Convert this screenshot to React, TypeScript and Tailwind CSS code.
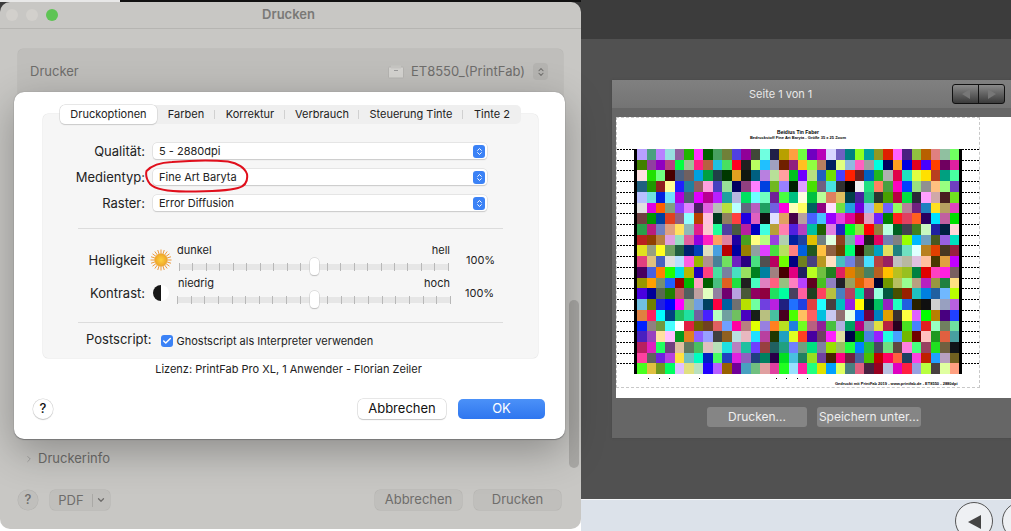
import React from 'react';
import { ChevronRight, ChevronDown, ChevronsUpDown, Check } from 'lucide-react';

const font = { fontFamily: 'Inter, "Liberation Sans", sans-serif' };

const chart = [
  'b8a0ff 4aa080 b880ff 98e0e0 9060a0 20b800 ff30ff 006000 48a060 708038 5040e0 900098 404838 70ffe0 202048 b8a000 ffa040 70ff40 7000c0 b800b8 d8d8ff 7060c0 008080 90ff20 00a0a0 909820 e02000 ff60ff 482080 90c040 b86000 e08080 90c0a0 70ff60',
  '408000 9040a0 9000c0 b84080 00ff40 a0c098 ff2080 b86040 20c0e0 48e060 ff0020 202020 b8ff60 20c0ff a0a0c0 702000 902080 ffc020 90ff40 b88060 002060 e0ff80 90b8e0 ff60c0 a0a0a0 00ffe0 000060 ffa020 0000e0 e00020 4800ff ff4000 700060 e020a0',
  'ffe0e0 20e000 70ff80 480000 4a6080 706060 00a0e0 00a040 204048 003800 e0a020 101810 006080 b880e0 b8e098 ffa0a0 00c020 7000ff b8e080 2060c0 70e000 4840ff ff2000 702020 0060c0 20b820 b0b0b0 e00048 20e0c0 e0ff40 ffe000 b84020 00a080 48ffa0',
  '206080 209800 902020 ffff98 2020ff 2080a0 906060 ffa0e0 4840c0 98e098 000060 904080 ff80ff 0040e0 70b820 9880ff 002000 e0a0ff 48e000 706080 48e0e0 303030 000000 f0f0f0 20e080 ff8060 48a040 ff00c0 0040ff 98e080 909090 ffc080 98ff80 7040c0',
  'b8c0ff 70e0e0 0020e0 70e0ff b000e0 506070 e000ff b80090 b820ff 20a0a0 b8b8e0 00e060 70ffff 70ffc0 702098 48ff40 00c080 ffffe0 00c040 b8ff98 e08060 e0c060 004048 4820a0 20c080 283830 48a000 b80040 00e040 282838 ffa0ff d0a8a8 482020 70e020',
  'e0e0e0 e000e0 ff6000 80a080 9040ff e080ff 482060 e060e0 b8c0b8 b8e040 b8ffff 606880 b860c0 20a060 7060e0 ff00e0 ffffb8 ffff60 006060 900080 ffe0ff 70e040 20a0e0 7000e0 90b8ff e0c020 7060ff 90ff60 b88098 702080 2080c0 ffe020 b8a060 e040c0',
  '704040 009800 0040a0 e04020 906080 90ffff b84000 ffc0e0 003820 908060 ff4040 2000e0 e060c0 101010 e0e0ff e0a060 480048 b8a0a0 4860ff 48c0ff 9800ff e040e0 e00098 b80020 e0a0c0 7020ff 008000 ff2020 e04060 ff6020 280060 00e0ff c060a0 00e000',
  '2a9f4a b81e7e 7080c0 e0a080 ffe060 90b8b8 e0208a fcc8d0 20ff98 5040a0 4a5a40 b820a0 0000c0 40ffe0 b8a038 ff80b0 5020e0 b040c0 00c0a0 206000 e080e0 2020c0 00ff20 90e040 ff0000 908040 b8ffe0 006020 404050 408020 c8f8c0 2020a0 002040 ffd8d8',
  'b82020 904000 b88040 e0a0e0 98e0c0 e060a0 9000e0 ff20c0 ffa060 e080a0 2000a0 48a020 ffff80 b8ff80 9840e0 b0d0b0 0020a0 2040a0 e0c000 708080 e0ffe0 904020 70b8a0 e020ff 202020 e00060 7080b0 808080 98ff00 00b8ff 70a0c0 485820 9860e0 00e0c0',
  'e0e020 98a080 ffff20 70a060 206040 002070 0040b8 e0e0c0 48a0e0 b80000 0000a0 988000 90a0a0 e040ff 48e040 b8e060 ff8080 0060e0 205820 ffc040 906040 704000 00ff70 300000 488040 00a0c0 e0e060 208080 70e0c0 e0ffff b88020 e04000 483820 982040',
  'e04080 e0c080 4860c0 e0e0e0 b8e0ff ff60e0 98b800 b09090 488098 70e060 7020c0 280080 48e080 505050 b80060 70ff00 000080 708020 484080 b89820 ffe0c0 48c0c0 7080e0 706060 48e0ff b84040 982060 c0c0c0 b8b8a0 e0c0e0 ffc0a0 483800 e0a040 c000ff',
  '480060 4860e0 ff8000 20ff00 00e0e0 b8b800 2000c0 ff4080 48e0a0 7880a0 48e0c0 98e060 008020 0080a0 a08080 480000 e00080 202060 b8ff20 70c040 208020 e02060 e08000 988020 488060 b86020 ffc000 b8c020 98c020 008040 e00000 ff40c0 ff20e0 786060',
  '989800 ffa000 789070 2060ff 980000 00b800 ffa0c0 006000 48c080 e06020 20e040 202020 48ffc0 e080c0 ff6080 98c080 ff80c0 b840ff 600020 48c020 9080c0 202028 98a060 e06000 ff8040 000030 709800 b8c060 98ff90 b8a080 b820c0 989840 208040 ffe080',
  '4800e0 000098 586850 208000 b86060 506060 c0a0a0 e0ffc0 9080a0 700070 b8a0e0 485838 900060 900040 20e060 00ffa0 484060 ff60a0 204020 ff4060 b8c040 4880c0 b84060 00e0a0 702060 98ffe0 005840 485000 982000 20c0c0 0080e0 2060a0 70b8ff b8ff00',
  '70c0e0 708000 2020e0 0000ff ff00ff 98b090 70a0e0 004060 ff0040 0060a0 707070 b8e000 70ffa0 7040e0 b820e0 202080 2070ff 2040e0 e04040 20ffff 484040 00c0c0 9820e0 ffff00 002020 00c060 9820c0 20ffc0 2060e0 282000 101010 d0d0d0 98a0c0 b860e0',
  'e08040 ff2060 00ffff 004080 20c060 20e0a0 7060a0 4820ff b8ffc0 70a0a0 70c060 4800c0 182018 b8c080 48c0a0 480020 48ff00 ffc060 ff6060 00c0e0 c8c8f0 907070 e0ffe8 0060ff 700040 0080c0 e0a000 383030 ffff40 e060ff 00ff00 b88000 480080 2040ff',
  '0020ff 908080 709840 48ffff ffffff e02040 706000 704020 e06060 70a0ff ff00a0 b88080 e0ff00 9880e0 ff8020 b8e020 2080e0 70ff20 b86080 902098 48c040 b0b0e0 00a060 b80080 9098b0 e0e040 b82040 280020 48e020 4880ff e02020 98ffc0 708060 70e0a0',
  '4820c0 9840c0 ffe0a0 ffc0ff 009820 e08020 9060ff 98a0ff 404040 906020 b8e0e0 e8b8c0 20e0ff b840a0 203800 20a0c0 e0ff20 ff4020 4800a0 704060 ff20ff e0e0a0 000048 00a000 4880e0 9820ff 20ffe0 48a0ff 70b800 700000 ffc0c0 209820 e06040 48a0a0',
  'b82060 e020c0 20ff60 704080 e0c0a0 607860 48c060 e0c0c0 b8e0b8 20e0e0 b880c0 20c0a0 7040ff 984040 206060 20a080 7080ff 70a080 00e080 8080a0 98e000 98c060 20ff40 0080ff 20c040 484860 70e080 604840 ff80e0 48ff80 984060 20e020 706040 101418',
  'ff40a0 606060 7020e0 b840e0 ffe040 70c0c0 00ffc0 0020c0 48ff60 2040c0 e020e0 9060c0 204080 008060 280048 00e020 48c0e0 208060 98e020 7040a0 482000 ff0080 702040 4860a0 48c000 c00000 ff0060 ff6040 204060 ff40e0 c02000 20a0ff b8a0c0 706020',
  '48ff20 e0c040 709820 00ff60 e0c0ff e0e080 b8e0c0 2000ff b860ff 986000 700098 48a0c0 70c080 e0a0a0 e040a0 20ff20 98e0ff ff20a0 20ff80 e0e000 00a0ff e0ff60 488080 e06080 482040 980020 b8c0e0 e000c0 ff2040 98a0e0 b8ff40 484040 e0ffa0 ffa080',
].map(r => r.split(' '));

const tabs = [
  { name: 'Druckoptionen', w: 'w-[97px]' },
  { name: 'Farben', w: 'w-[58px]' },
  { name: 'Korrektur', w: 'w-[70px]' },
  { name: 'Verbrauch', w: 'w-[74px]' },
  { name: 'Steuerung Tinte', w: 'w-[104px]' },
  { name: 'Tinte 2', w: 'w-[58px]' },
];

// little marks under the colour chart
const bottomDots = [31, 10, 9, 29, 76, 9, 10, 9];

const Select = ({ value }: { value: string }) => (
  <div className="w-[334px] h-[16px] bg-white rounded-[4px] shadow-[0_0_0_0.5px_#d4d4d4,0_1px_1px_#c4c4c4] flex items-center justify-between pl-[6px] pr-[2px] text-[11px] text-[#222]">
    <span>{value}</span>
    <span className="w-[12px] h-[13px] rounded-[3px] bg-[#3b82f6] flex items-center justify-center text-white">
      <ChevronsUpDown className="w-[9px] h-[9px]" strokeWidth={2.5} />
    </span>
  </div>
);

const Slider = ({ left, right, width, leftPad }: { left: string; right: string; width: string; leftPad: string }) => (
  <div className="w-[274px] flex flex-col">
    <div className="h-[14px] pb-[2px] flex justify-between items-center text-[11px] text-[#222] leading-none">
      <span className={leftPad}>{left}</span>
      <span className="pr-[1px]">{right}</span>
    </div>
    <div className="relative h-[16px] flex items-center justify-center">
      <div className={`${width} h-[6px] bg-[#e6e6e6] flex justify-between items-center`}>
        {Array.from({ length: 21 }).map((_, i) => (
          <span key={i} className="w-[1px] h-[8px] bg-[#b8b8b8]" />
        ))}
      </div>
      <div className="absolute left-[133px] top-[-1px] w-[9px] h-[17px] bg-white rounded-[4px] shadow-[0_0_0_0.5px_#c8c8c8,0_1px_1px_#bbb]" />
    </div>
  </div>
);

const Sun = () => (
  <svg width="22" height="22" viewBox="0 0 22 22">
    <defs>
      <radialGradient id="sun">
        <stop offset="0%" stopColor="#ffd23c" />
        <stop offset="100%" stopColor="#eda32a" />
      </radialGradient>
    </defs>
    {Array.from({ length: 20 }).map((_, i) => {
      const a = (i * Math.PI) / 10;
      return (
        <line key={i} x1={11 + 6 * Math.cos(a)} y1={11 + 6 * Math.sin(a)} x2={11 + 10.5 * Math.cos(a)} y2={11 + 10.5 * Math.sin(a)} stroke="#eb9a3c" strokeWidth="1" />
      );
    })}
    <circle cx="11" cy="11" r="6.5" fill="url(#sun)" />
  </svg>
);

const Contrast = () => (
  <svg width="18" height="18" viewBox="0 0 18 18">
    <circle cx="9" cy="9" r="8" fill="#fff" />
    <path d="M9 1a8 8 0 0 0 0 16z" fill="#161616" />
  </svg>
);

const PrintSheet = () => (
  <div className="absolute left-[14px] top-[90px] w-[551px] h-[347px] bg-white rounded-[10px] shadow-[0_0_1px_#777,0_1px_1px_#777,0_12px_40px_rgba(0,0,0,0.3)] flex flex-col pt-[13px]">
    <div className="relative z-10 -mb-[10px] ml-[46px] flex w-[461px] h-[19px] bg-[#efefef] rounded-[5px] text-[11px] text-[#222] items-center">
      {tabs.map((t, i) => (
        <div
          key={t.name}
          className={`${t.w} h-full flex items-center justify-center ${
            i === 0
              ? 'bg-white rounded-[5px] shadow-[0_0_0_0.5px_#d0d0d0,0_1px_1px_#c8c8c8]'
              : i < tabs.length - 1
                ? 'relative after:absolute after:right-0 after:top-[5px] after:h-[9px] after:w-[1px] after:bg-[#d0d0d0]'
                : ''
          }`}
        >
          {t.name}
        </div>
      ))}
    </div>

    <div className="relative ml-[29px] w-[495px] h-[244px] bg-[#f6f6f6] rounded-[5px] shadow-[0_0_0_0.5px_#e6e6e6] pt-[29px] text-[#222]">
      <div className="flex flex-col gap-[10px]">
        {[
          ['Qualität:', '5 - 2880dpi'],
          ['Medientyp:', 'Fine Art Baryta'],
          ['Raster:', 'Error Diffusion'],
        ].map(([label, value]) => (
          <div key={label} className="flex items-center">
            <span className="w-[102px] text-right text-[13px] leading-none">{label}</span>
            <span className="ml-[8px]">
              <Select value={value} />
            </span>
          </div>
        ))}
      </div>

      <div className="ml-[35px] mt-[17px] w-[425px] h-[1px] bg-[#dcdcdc]" />

      <div className="mt-[14px] flex items-center h-[33px]">
        <span className="w-[102px] pt-[2px] text-right text-[13px]">Helligkeit</span>
        <span className="ml-[5px] w-[27px]"><Sun /></span>
        <Slider left="dunkel" right="hell" width="w-[270px]" leftPad="" />
        <span className="ml-[15px] pt-[2px] text-[11px]">100%</span>
      </div>
      <div className="flex items-center h-[33px]">
        <span className="w-[102px] pt-[2px] text-right text-[13px]">Kontrast:</span>
        <span className="ml-[7px] w-[25px]"><Contrast /></span>
        <Slider left="niedrig" right="hoch" width="w-[274px]" leftPad="pl-[1px]" />
        <span className="ml-[14px] pt-[2px] text-[11px]">100%</span>
      </div>

      <div className="ml-[35px] mt-[13px] w-[425px] h-[1px] bg-[#dcdcdc]" />

      <div className="mt-[10px] flex items-center">
        <span className="ml-[43px] text-[13px] leading-none -mt-[3px]">Postscript:</span>
        <span className="ml-[9px] w-[12px] h-[12px] rounded-[3px] bg-[#3b82f6] flex items-center justify-center text-white">
          <Check className="w-[10px] h-[10px]" strokeWidth={3.5} />
        </span>
        <span className="ml-[4px] text-[11px]">Ghostscript als Interpreter verwenden</span>
      </div>
    </div>

    <div className="mt-[4px] h-[14px] text-center text-[11px] text-[#222] leading-[14px] -ml-[2px]">
      Lizenz: PrintFab Pro XL, 1 Anwender - Florian Zeiler
    </div>

    <div className="mt-[23px] flex items-center pl-[19px] pr-[20px]">
      <div className="w-[20px] h-[20px] rounded-full bg-white shadow-[0_0_0_0.5px_#d0d0d0,0_1px_1px_#c4c4c4] flex items-center justify-center text-[13px] font-medium text-[#111]">?</div>
      <div className="ml-auto w-[88px] h-[20px] rounded-[5px] bg-white shadow-[0_0_0_0.5px_#d0d0d0,0_1px_1px_#c4c4c4] flex items-center justify-center text-[13px] text-[#111]">Abbrechen</div>
      <div className="ml-[12px] w-[87px] h-[20px] rounded-[5px] bg-[linear-gradient(#4b91f8,#2f76ef)] flex items-center justify-center text-[13px] text-white">OK</div>
    </div>

    <svg className="absolute left-[130px] top-[67px] pointer-events-none" width="110" height="34" viewBox="0 0 110 34" fill="none">
      <path d="M2.5 12C8 6 18 3.500 28 3C45 1.500 70 1 84 2.500C94 4 101 9 103 15C104 22 102 27 94 29C84 32 62 32.500 42 32.500C25 32.500 11 30 6 25C3 21 1.500 16 2.500 12Z" stroke="#e00f1c" strokeWidth="2" />
    </svg>
  </div>
);

const PrintWindow = () => (
  <div className="w-[581px] shrink-0 flex flex-col bg-[linear-gradient(#3a3a3a_50%,#fff_50%)]">
    <div className="h-[2px] flex">
      <div className="w-[120px] bg-[#e8e8e8]" />
      <div className="flex-1 bg-[#111]" />
    </div>
    <div className="relative flex-1 rounded-[10px] bg-[#c8c7c4] flex flex-col text-[#6e6d6b]">
      <div className="relative h-[27px] pr-[4px] flex items-center justify-center border-b border-[#b6b5b2]">
        <div className="absolute left-[6px] top-[7px] flex gap-[8px]">
          <span className="w-[12px] h-[12px] rounded-full bg-[#d2d0cc]" />
          <span className="w-[12px] h-[12px] rounded-full bg-[#d2d0cc]" />
          <span className="w-[12px] h-[12px] rounded-full bg-[#5ec454]" />
        </div>
        <span className="text-[13px] font-semibold text-[#7a7977]">Drucken</span>
      </div>

      <div className="mt-[20px] mx-[18px] h-[70px] bg-[#bfbebb] rounded-[5px] shadow-[0_0_0_0.5px_#b8b7b4] flex items-start pt-[13px] pl-[12px] pr-[15px] text-[13px]">
        <span>Drucker</span>
        <div className="ml-auto flex items-center">
          <svg width="16" height="14" viewBox="0 0 16 14" className="mr-[7px]">
            <rect x="0.500" y="2" width="15" height="11" rx="1" fill="#d4d3d0" stroke="#b5b4b1" />
            <rect x="3" y="0.500" width="10" height="3" fill="#c6c5c2" />
            <rect x="6" y="5" width="4" height="1" fill="#999" />
          </svg>
          <span>ET8550_(PrintFab)</span>
          <span className="ml-[8px] w-[15px] h-[17px] rounded-[4px] bg-[#b5b4b1] flex items-center justify-center">
            <ChevronsUpDown className="w-[10px] h-[10px]" strokeWidth={2.5} />
          </span>
        </div>
      </div>

      <div className="mt-auto ml-[24px] h-[16px] flex items-center text-[13px]">
        <ChevronRight className="w-[10px] h-[10px] mr-[4px] text-[#9a9997]" />
        Druckerinfo
      </div>

      <div className="mt-[23px] mb-[19px] flex items-center pl-[18px] pr-[20px] text-[13px]">
        <div className="w-[20px] h-[20px] rounded-full bg-[#c0bfbc] shadow-[0_0_0_0.5px_#b4b3b0] flex items-center justify-center font-medium">?</div>
        <div className="ml-[12px] w-[60px] h-[20px] rounded-[5px] bg-[#c0bfbc] shadow-[0_0_0_0.5px_#b4b3b0] flex items-center">
          <span className="w-[43px] text-center border-r border-[#aaa9a6] leading-[13px]">PDF</span>
          <ChevronDown className="w-[10px] h-[10px] ml-[3px]" strokeWidth={3} />
        </div>
        <div className="ml-auto w-[87px] h-[20px] rounded-[5px] bg-[#c0bfbc] shadow-[0_0_0_0.5px_#b4b3b0] flex items-center justify-center">Abbrechen</div>
        <div className="ml-[12px] w-[87px] h-[20px] rounded-[5px] bg-[#c0bfbc] shadow-[0_0_0_0.5px_#b4b3b0] flex items-center justify-center">Drucken</div>
      </div>

      <div className="absolute left-[569px] top-[298px] w-[10px] h-[168px] rounded-full bg-[#a9a8a5]" />
      <PrintSheet />
    </div>
    <div className="h-[2px]" />
  </div>
);

const Dashes = () => (
  <div className="w-[19px] flex flex-col">
    {chart.map((_, i) => (
      <div key={i} className="h-[10.72px]">
        <div className="h-[1px] w-[17px] mx-auto bg-[repeating-linear-gradient(90deg,#000_0_2px,transparent_2px_3px)]" />
      </div>
    ))}
  </div>
);

const Preview = () => (
  <div className="flex-1 min-w-0 flex flex-col bg-[#3d3d3d]">
    <div className="h-[39px] shrink-0 bg-[#3c3c3c]" />
    <div className="h-[460px] shrink-0 bg-[#515151] pt-[41px] pl-[31px]">
      <div className="h-[358px] bg-[#666] flex flex-col shadow-[0_0_2px_#444]">
        <div className="h-[28px] shrink-0 bg-[linear-gradient(#808080,#747474)] flex items-center relative">
          <span className="ml-[137px] text-[11px] text-[#e8e8e8]">Seite 1 von 1</span>
          <div className="absolute left-[340px] top-[4px] w-[53px] h-[20px] rounded-[3px] border border-[#111] bg-[linear-gradient(#8a8a8a,#3a3a3a)] flex">
            <div className="flex-1 border-r border-[#111] flex items-center justify-center">
              <span className="border-y-[5px] border-r-[8px] border-y-transparent border-r-[#777]" />
            </div>
            <div className="flex-1 flex items-center justify-center">
              <span className="border-y-[5px] border-l-[8px] border-y-transparent border-l-[#777]" />
            </div>
          </div>
        </div>

        <div className="mt-[9px] ml-[4px] h-[281px] bg-white shrink-0">
          <div className="w-[364px] h-[271px] border border-dashed border-[#c8c8c8] flex flex-col">
            <div className="h-[31px] flex flex-col items-center pt-[11px] shrink-0" style={{ fontFamily: '"Liberation Sans", sans-serif' }}>
              <span className="text-[5px] font-bold leading-[6px] text-black">Beidius Tin Faber</span>
              <span className="text-[4px] font-bold leading-[6px] text-black">Bedruckstoff Fine Art Baryta - Größe 35 x 25 Zoom</span>
            </div>
            <div className="flex">
              <Dashes />
              <div className="border-x-[3px] border-black">
                {chart.map((row, y) => (
                  <div key={y} className="flex h-[10.72px]">
                    {row.map((c, x) => (
                      <span key={x} className="w-[9.47px] h-full" style={{ backgroundColor: `#${c}` }} />
                    ))}
                  </div>
                ))}
              </div>
              <Dashes />
            </div>
            <div className="flex h-[1px] mt-[4px]">
              {bottomDots.map((gap, i) => (
                <span key={i} className="w-[1px] h-[1px] bg-black shrink-0" style={{ marginLeft: gap }} />
              ))}
            </div>
            <div className="mt-[2px] ml-[218px] text-[4px] font-bold leading-[6px] text-black whitespace-nowrap" style={{ fontFamily: '"Liberation Sans", sans-serif' }}>
              Gedruckt mit PrintFab 2019 - www.printfab.de - ET8550 - 2880dpi
            </div>
          </div>
        </div>

        <div className="mt-[9px] flex text-[12px] text-[#eee]">
          <div className="ml-[95px] w-[100px] h-[20px] rounded-[3px] bg-[#858585] flex items-center justify-center">Drucken...</div>
          <div className="ml-[10px] w-[104px] h-[20px] rounded-[3px] bg-[#858585] flex items-center justify-center">Speichern unter...</div>
        </div>
      </div>
    </div>
    <div className="flex-1 bg-[#dce2ea] border-t border-[#f4f6f8] flex pl-[374px] pt-[2px] gap-[9px]">
      <div className="w-[38px] h-[38px] shrink-0 rounded-full border border-[#555] bg-[#eef0f3] flex items-start justify-center pt-[12px]">
        <span className="border-y-[7px] border-r-[13px] border-y-transparent border-r-[#444]" />
      </div>
      <div className="w-[38px] h-[38px] shrink-0 rounded-full border border-[#555] bg-[#eef0f3]" />
    </div>
  </div>
);

export default function App() {
  return (
    <div className="w-[1011px] h-[531px] overflow-hidden flex" style={font}>
      <PrintWindow />
      <Preview />
    </div>
  );
}
